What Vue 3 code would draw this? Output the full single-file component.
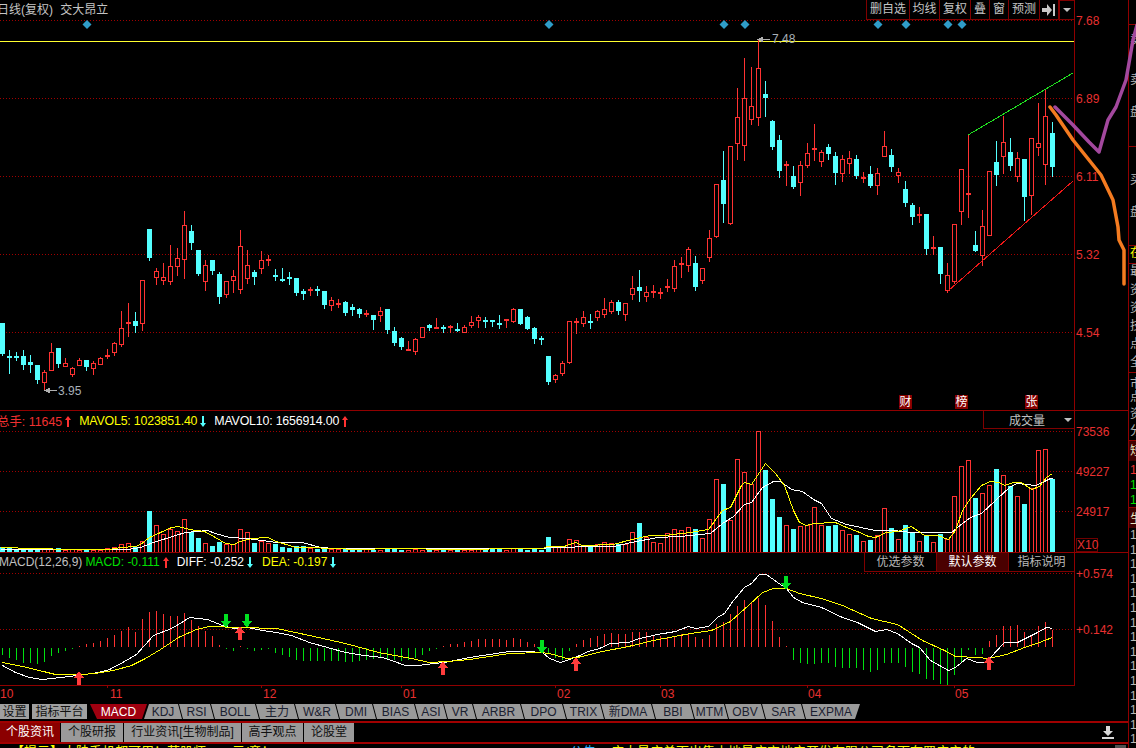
<script setup>
const K = [
[323,323,354,355,0],[350,356,357,373,0],[352,356,357,360,0],[350,356,365,369,0],[355,362,365,372,0],[365,365,380,383,0],[370,372,382,390,1],[343,352,370,370,1],[348,348,364,367,0],[358,363,366,366,1],
[367,368,374,376,1],[358,360,365,365,1],[360,360,367,370,0],[361,363,368,374,1],[357,358,364,364,1],[349,355,357,358,1],[342,343,352,355,1],[311,328,344,346,1],[303,322,323,336,1],[312,321,326,332,0],
[280,280,323,330,1],[229,229,258,260,0],[268,271,277,284,1],[263,277,280,284,1],[245,266,281,284,1],[248,258,266,275,1],[211,225,259,278,1],[225,231,243,249,0],[250,250,274,275,0],[260,265,281,290,1],
[260,260,271,274,0],[272,274,297,303,0],[281,281,294,297,1],[270,276,280,292,1],[230,246,289,293,1],[250,265,278,283,1],[270,272,277,284,0],[251,260,268,273,1],[255,259,260,265,1],[269,275,276,280,0],
[268,279,280,281,0],[272,277,278,284,0],[278,278,293,295,0],[289,291,294,299,0],[287,289,290,295,1],[286,289,290,295,0],[291,291,305,308,0],[297,300,305,310,1],[299,303,304,307,1],[301,302,313,315,0],
[304,307,310,315,0],[308,309,314,317,0],[310,313,314,316,1],[315,315,320,329,0],[307,311,315,321,1],[309,309,330,333,0],[327,331,343,345,0],[337,338,347,349,0],[341,349,350,350,1],[338,339,351,354,1],
[327,327,337,337,1],[324,325,328,330,0],[318,327,328,328,1],[325,327,329,332,0],[325,326,327,332,1],[323,329,330,331,0],[325,327,332,332,1],[316,322,325,327,1],[315,317,320,327,1],[317,320,321,327,0],
[320,320,322,326,0],[315,323,324,328,0],[319,319,321,327,1],[308,309,321,322,1],[309,309,324,324,0],[316,317,329,329,0],[327,328,339,343,0],[336,338,340,344,0],[356,356,382,384,0],[374,375,379,382,1],
[361,363,373,375,1],[321,321,362,363,1],[318,321,322,333,1],[311,317,323,326,1],[314,321,322,328,0],[310,311,317,320,1],[298,309,314,317,1],[300,302,311,313,1],[300,302,311,314,0],[303,303,314,320,1],
[276,288,294,299,1],[270,287,291,301,0],[286,292,296,301,1],[285,291,292,297,1],[288,292,293,298,1],[279,286,288,291,1],[260,266,288,291,1],[257,263,265,277,1],[247,249,265,271,1],[256,263,287,290,0],
[268,268,280,283,1],[230,238,257,261,1],[184,184,236,237,1],[151,180,204,222,0],[146,146,223,224,1],[88,117,143,159,1],[58,98,145,160,1],[67,106,119,124,1],[40,68,117,125,1],[81,94,98,116,0],
[120,121,147,149,0],[135,140,171,177,0],[161,164,165,185,1],[166,176,187,188,0],[161,165,182,195,1],[143,153,165,167,1],[124,148,149,160,1],[150,152,161,166,1],[144,147,154,159,0],[152,156,173,184,0],
[155,159,173,181,1],[151,158,163,173,1],[155,159,176,178,0],[172,177,179,182,1],[166,174,186,187,0],[168,173,185,194,1],[131,146,156,156,1],[149,155,167,171,0],[168,172,175,182,1],[181,189,203,206,0],
[203,205,217,224,0],[207,214,215,222,1],[214,214,249,254,0],[236,247,249,254,1],[247,247,274,283,0],[263,275,290,292,1],[224,224,281,283,1],[169,169,211,224,1],[135,193,195,217,1],[231,245,251,251,0],
[210,226,255,265,1],[171,171,235,235,1],[141,162,175,185,0],[116,142,156,173,1],[138,152,166,170,0],[152,158,176,181,1],[159,159,197,220,0],[138,138,195,214,1],[103,143,147,155,1],[89,116,164,184,1],
[122,133,167,176,0]
]
const volTops = [
547,548,549,549,549,549,549,549,548,550,549,550,550,550,550,548,547,544,543,547,541,511,525,534,529,531,519,532,538,543,546,542,544,544,529,532,543,541,543,544,547,548,546,546,548,549,547,549,
549,549,550,549,549,550,550,549,549,550,550,549,550,548,550,550,550,549,550,550,549,550,549,549,550,548,549,550,549,550,537,547,547,
539,540,546,546,544,542,543,544,544,532,523,537,542,543,533,529,530,527,529,538,519,479,484,520,459,472,484,431,470,499,517,525,529,526,525,507,525,526,525,530,534,535,541,540,535,508,528,539,525,532,541,535,542,534,539,496,466,460,498,493,485,469,475,486,496,504,488,450,449,479
]
const hist = [
300,310,315,323,325,326,322,303,295,288,282,273,268,264,258,250,240,229,215,230,192,170,168,177,182,182,175,195,212,228,242,270,283,288,278,279,287,285,283,293,300,305,315,318,318,318,318,318,318,320,320,318,316,312,310,312,315,318,316,310,300,288,282,274,267,266,262,258,252,251,252,253,254,249,252,260,268,290,298,308,315,
288,267,255,248,243,237,234,237,238,232,232,232,240,243,247,245,238,235,245,252,240,208,200,176,153,135,140,130,150,197,245,278,315,325,327,327,325,323,335,338,338,338,345,350,345,325,323,325,335,352,358,372,375,387,390,360,325,284,300,297,258,240,212,212,209,232,240,213,200,225
]
const candles = K.map((k, i) => {
  const [h, t, b, l, up] = k
  return { i, x: 2 + 7 * i, h, t, b, l, up: !!up, thin: b - t <= 2, v: volTops[i] }
})
const histBars = hist.map((z, i) => {
  const raw = Math.round(555 + z / 3)
  const red = z <= 278
  const y = red ? Math.min(raw, 646) : 648
  const h = red ? 647 - y : Math.max(raw - 648, 1)
  return { x: 2 + 7 * i, y, h, red }
})
const pp = (a) => {
  let s = ''
  for (let i = 0; i < a.length; i += 2) s += (Math.round(a[i]) + 0.5) + ',' + (Math.round(a[i + 1]) + 0.5) + ' '
  return s
}
const conv = (a, ox) => {
  const o = []
  for (let i = 0; i < a.length; i += 2) o.push(ox + a[i] / 2.75, 555 + a[i + 1] / 3)
  return o
}
const mavY = pp([0,547,13,547,22,548,47,548,58,549,109,549,120,547,135,546,140,544,149,537,160,532,171,527,178,526,189,529,204,531,215,537,225,543,233,544,240,541,251,538,267,537,276,541,295,547,313,547,327,548,342,548,349,549,400,548,415,548,436,549,542,548,547,546,564,546,566,545,575,542,582,545,613,544,631,539,650,535,664,535,690,532,708,529,722,510,730,507,741,485,744,482,751,484,765,463,775,473,784,485,793,510,799,522,806,525,813,523,835,522,846,527,857,531,868,536,875,537,886,532,897,531,911,526,924,535,937,535,948,539,955,530,962,510,970,498,981,485,990,481,999,482,1004,485,1013,482,1021,482,1031,489,1039,486,1046,477,1052,473])
const mavW = pp([0,549,127,549,140,547,153,542,175,535,185,532,207,530,215,533,229,537,247,538,276,542,302,542,320,547,335,548,542,548,549,547,566,547,584,546,613,546,631,542,657,537,679,536,710,533,722,523,733,516,744,504,751,502,762,487,773,481,780,481,791,489,802,491,813,499,821,503,831,518,846,524,875,530,893,530,911,532,951,532,962,523,970,517,981,513,995,500,1010,486,1017,483,1035,485,1042,482,1050,478,1052,478])
const macdW = pp([
  ...conv([5,330,40,352,80,367,115,373,140,368,190,362,230,357,270,350,300,342,340,318,375,297,395,270,420,240,470,220,490,208,520,187,570,192,610,210,640,220,680,215,720,224,760,230,800,240,850,262,900,275,950,290,1000,300,1050,305,1075,315,1115,330,1150,330,1190,325,1220,320,1290,305,1400,288,1450,287,1490,292,1510,310,1540,322], 0),
  ...conv([0,315,30,302,60,288,90,278,120,265,170,260,200,248,250,238,300,228,335,213,355,218,390,212,415,185,435,175,460,135,490,97,510,85,530,57,550,57,580,80,605,100,625,125,650,140,700,155,760,185,800,200,850,228,880,223,910,233,950,265,970,275,1000,315,1050,345,1070,335,1100,310,1130,320,1150,320,1165,305,1205,262,1240,260,1290,235,1320,216,1337,220], 566)
])
const macdY = pp([
  ...conv([5,320,60,332,130,352,150,357,220,358,260,355,310,345,360,330,400,310,440,282,490,247,540,222,575,214,660,215,760,220,850,240,950,265,1040,290,1130,310,1180,320,1230,318,1290,312,1400,295,1490,290,1520,298], 0),
  ...conv([0,308,30,305,100,288,170,272,240,255,340,235,400,225,450,197,500,150,540,110,570,100,605,100,640,115,700,130,760,150,840,188,910,208,980,255,1040,285,1070,302,1130,306,1160,310,1210,298,1260,275,1300,262,1337,247], 566)
])
const diamonds = [87, 549, 724, 745, 878, 906, 948, 962]
const mainGrid = [20, 98, 176, 254, 332]
const upArrows = [[79, 671], [240, 626], [443, 661], [576, 657], [989, 656]]
const downArrows = [[226, 614], [247, 614], [542, 640], [786, 576]]
const ticks = [107, 261, 401, 555, 660, 807, 954]
const months = [
  { t: '10', w: 110 }, { t: '11', w: 153 }, { t: '12', w: 140 }, { t: '01', w: 154 },
  { t: '02', w: 104 }, { t: '03', w: 147 }, { t: '04', w: 147 }, { t: '05', w: 60 }
]
const tools = [
  { t: '删自选', w: 43 }, { t: '均线', w: 30 }, { t: '复权', w: 31 }, { t: '叠', w: 19 }, { t: '窗', w: 19 }, { t: '预测', w: 31 }
]
const tabs = [
  ['MACD', 54], ['KDJ', 35], ['RSI', 32], ['BOLL', 45], ['主力', 39], ['W&R', 41], ['DMI', 37], ['BIAS', 42], ['ASI', 29], ['VR', 29], ['ARBR', 48], ['DPO', 42], ['TRIX', 38], ['新DMA', 51], ['BBI', 39], ['MTM', 34], ['OBV', 37], ['SAR', 40], ['EXPMA', 55]
]
const infoTabs = [
  { t: '个股资讯', w: 60 }, { t: '个股研报', w: 62 }, { t: '行业资讯[生物制品]', w: 117 }, { t: '高手观点', w: 61 }, { t: '论股堂', w: 50 }
]
const params = [
  { t: '优选参数', w: 71 }, { t: '默认参数', w: 73, on: true }, { t: '指标说明', w: 65 }
]
const sideRows = [
  { h: 24, t: '' }, { h: 49, t: '卖', line: 1, pad: 8 }, { h: 32, t: '卖' }, { h: 41, t: '盘' },
  { h: 27, t: '', line: 1 }, { h: 32, t: '买' }, { h: 40, t: '盘' },
  { h: 18, t: '在', line: 1, cls: 'yellow' }, { h: 20, t: '最', line: 1 }, { h: 18, t: '资' }, { h: 18, t: '资' }, { h: 18, t: '技' }, { h: 18, t: '点' }, { h: 17, t: '全' },
  { h: 18, t: '市', line: 1, pad: 4 }, { h: 17, t: '点' }, { h: 17, t: '资' }, { h: 16, t: '分' },
  { h: 21, t: '短', line: 1, cls: 'dark', pad: 3 }, { h: 15, t: '1', cls: 'red', pad: 2 }, { h: 15, t: '1', cls: 'green', pad: 2 }, { h: 16, t: '1', cls: 'green', pad: 2 },
  { h: 21, t: '生', line: 1, cls: 'dark', pad: 4 },
  ...Array.from({ length: 15 }, () => ({ h: 14.6, t: '1' }))
]
</script>

<template>
  <div class="screen">
    <div class="workspace">
      <section class="panel main-panel">
        <div class="plot">
          <svg class="chart" width="1074" height="410" viewBox="0 0 1074 410">
            <line v-for="y in mainGrid" :key="y" class="grid" x1="0" x2="1074" :y1="y + 0.5" :y2="y + 0.5" />
            <rect x="0" y="41" width="1074" height="1" class="yline" />
            <polygon v-for="x in diamonds" :key="x" class="diamond" :points="`${x - 4.5},24.5 ${x},20 ${x + 4.5},24.5 ${x},29`" />
            <template v-for="c in candles" :key="c.i">
              <rect :x="c.x" :y="c.h" width="1" :height="c.l - c.h + 1" :class="c.up ? 'fill-r' : 'fill-c'" />
              <rect v-if="!c.up || c.thin" :x="c.x - 2" :y="c.t" width="5" :height="Math.max(c.b - c.t, 2)" :class="c.up ? 'fill-r' : 'fill-c'" />
              <rect v-else :x="c.x - 1.5" :y="c.t + 0.5" width="4" :height="c.b - c.t" class="hollow" />
            </template>
            <line x1="968" y1="135" x2="1073" y2="73" class="trend-g" />
            <line x1="948" y1="291" x2="1073" y2="181" class="trend-r" />
            <path d="M758 39.5h12M758 39.5l4-2v4z" class="mark" />
            <text x="772" y="43" class="price-mark">7.48</text>
            <path d="M45 390.5h12M45 390.5l4-2v4z" class="mark" />
            <text x="58" y="395" class="price-mark">3.95</text>
          </svg>
          <div class="title">日线(复权) <span class="stock">交大昂立</span></div>
          <div class="toolbar">
            <div v-for="b in tools" :key="b.t" class="tool" :style="{ width: b.w + 'px' }">{{ b.t }}</div>
            <div class="tool arrow-tool">
              <svg width="14" height="12" viewBox="0 0 14 12"><path d="M0 4h5V0l5 6-5 6V8H0zM11 0h2v12h-2z" fill="#c8c8c8" /></svg>
            </div>
            <div class="tool drop-tool"><span class="caret"></span></div>
          </div>
          <span class="badge b1">财</span>
          <span class="badge b2">榜</span>
          <span class="badge b3">张</span>
        </div>
        <div class="axis">
          <span class="axis-label" v-for="(t, i) in ['7.68', '6.89', '6.11', '5.32', '4.54']" :key="t" :style="{ top: mainGrid[i] - 7 + 'px' }">{{ t }}</span>
        </div>
      </section>

      <section class="panel vol-panel">
        <div class="plot">
          <svg class="chart" width="1074" height="141" viewBox="0 411 1074 141">
            <line v-for="y in [431, 471, 511]" :key="y" class="grid" x1="0" x2="1074" :y1="y + 0.5" :y2="y + 0.5" />
            <template v-for="c in candles" :key="c.i">
              <rect v-if="!c.up" :x="c.x - 2" :y="c.v" width="5" :height="552 - c.v" class="fill-c" />
              <rect v-else :x="c.x - 1.5" :y="c.v + 0.5" width="4" :height="552 - c.v" class="hollow" />
            </template>
            <polyline :points="mavW" class="l-white" />
            <polyline :points="mavY" class="l-yellow" />
          </svg>
          <div class="legend legend-v">
            <span class="red">总手: 11645</span>
            <svg class="mini" viewBox="0 0 6 11"><path d="M3 0l3 4H4v7H2V4H0z" fill="#ff3232" /></svg>
            <span class="yellow tight gap8">MAVOL5: 1023851.40</span>
            <svg class="mini" viewBox="0 0 6 11"><path d="M3 11l3-4H4V0H2v7H0z" fill="#54ffff" /></svg>
            <span class="white tight gap8">MAVOL10: 1656914.00</span>
            <svg class="mini" viewBox="0 0 6 11"><path d="M3 0l3 4H4v7H2V4H0z" fill="#ff3232" /></svg>
          </div>
          <div class="selector">成交量<span class="caret sel-caret"></span></div>
        </div>
        <div class="axis">
          <span class="axis-label" style="top:13px">73536</span>
          <span class="axis-label" style="top:53px">49227</span>
          <span class="axis-label" style="top:93px">24917</span>
          <span class="x10">X10</span>
        </div>
      </section>

      <section class="panel macd-panel">
        <div class="plot plot-b">
          <svg class="chart" width="1074" height="132" viewBox="0 553 1074 132">
            <line v-for="y in [573, 629]" :key="y" class="grid" x1="0" x2="1074" :y1="y + 0.5" :y2="y + 0.5" />
            <rect v-for="b in histBars" :key="b.x" :x="b.x" :y="b.y" width="1" :height="b.h" :class="b.red ? 'fill-r' : 'fill-g'" />
            <polyline :points="macdW" class="l-white" />
            <polyline :points="macdY" class="l-yellow" />
            <path v-for="a in upArrows" :key="a[0]" class="up" :d="`M${a[0]} ${a[1]}l5 7h-3v7h-4v-7h-3z`" />
            <path v-for="a in downArrows" :key="a[0]" class="down" :d="`M${a[0]} ${a[1] + 14}l5-7h-3v-7h-4v7h-3z`" />
          </svg>
          <div class="legend legend-m">
            <span class="grey">MACD(12,26,9)</span>
            <span class="green gap3">MACD: -0.111</span>
            <svg class="mini" viewBox="0 0 6 11"><path d="M3 0l3 4H4v7H2V4H0z" fill="#ff3232" /></svg>
            <span class="white gap8">DIFF: -0.252</span>
            <svg class="mini" viewBox="0 0 6 11"><path d="M3 11l3-4H4V0H2v7H0z" fill="#54ffff" /></svg>
            <span class="yellow gap9">DEA: -0.197</span>
            <svg class="mini" viewBox="0 0 6 11"><path d="M3 11l3-4H4V0H2v7H0z" fill="#54ffff" /></svg>
          </div>
          <div class="params">
            <span v-for="p in params" :key="p.t" class="param" :class="{ active: p.on }" :style="{ width: p.w + 'px' }">{{ p.t }}</span>
          </div>
        </div>
        <div class="axis">
          <span class="axis-label" style="top:13px">+0.574</span>
          <span class="axis-label" style="top:69px">+0.142</span>
        </div>
      </section>

      <div class="timeline">
        <span v-for="x in ticks" :key="x" class="tick" :style="{ left: x + 'px' }"></span>
        <span v-for="m in months" :key="m.t" class="month" :style="{ width: m.w + 'px' }">{{ m.t }}</span>
      </div>

      <div class="tabbar">
        <span class="btn b-set">设置</span>
        <span class="btn b-plat">指标平台</span>
        <div class="tabs">
          <span v-for="(t, i) in tabs" :key="t[0]" class="tab" :class="{ on: i === 0, first: i === 1, last: i === tabs.length - 1 }" :style="{ width: t[1] + 3 + 'px' }">{{ t[0] }}</span>
        </div>
      </div>

      <div class="infobar">
        <span v-for="(t, i) in infoTabs" :key="t.t" class="info" :class="{ on: i === 0 }" :style="{ width: t.w + 'px' }">{{ t.t }}</span>
        <svg class="download" width="12" height="13" viewBox="0 0 12 13"><path d="M4 0h4v5h3L6 10 1 5h3zM0 11h12v2H0z" fill="#d8d8d8" /></svg>
      </div>

      <div class="ticker">
        <span class="t-left">【提示】大陆手机都可用！苏股师，一元/章！</span>
        <span class="t-blue">公告：</span>
        <span class="t-right">广大最广单面出售土地最广宇地产开发有限公司名下布罗广产的</span>
        <span class="scroll"></span>
      </div>
    </div>

    <aside class="side">
      <div v-for="(r, i) in sideRows" :key="i" class="side-row" :class="[r.cls, { line: r.line }]" :style="{ height: r.h + 'px', paddingTop: (r.pad || 0) + 'px' }">{{ r.t }}</div>
    </aside>

    <svg class="scribble" width="1136" height="748" viewBox="0 0 1136 748">
      <polyline points="1050,107 1056,115 1073,140 1089,160 1101,175 1113,200 1118,227 1119,240 1124,250 1124,284" class="s-orange" />
      <polyline points="1055,107 1073,125 1089,142 1099,152 1108,120 1116,107 1126,80 1129,63 1133,40 1137,25" class="s-purple" />
    </svg>
  </div>
</template>

<style>
html, body { margin: 0; background: #000; }
</style>

<style scoped>
.screen {
  position: relative;
  width: 1136px;
  height: 748px;
  overflow: hidden;
  display: flex;
  background: #000;
  font-family: "Liberation Sans", "Noto Sans CJK SC", sans-serif;
  font-size: 12px;
  color: #c0c0c0;
}
.workspace { width: 1128px; display: flex; flex-direction: column; flex: none; }
.panel { display: flex; flex: none; box-sizing: border-box; border-bottom: 1px solid #900000; }
.main-panel { height: 411px; }
.vol-panel { height: 142px; }
.macd-panel { height: 133px; border-bottom: 0; }
.plot { position: relative; width: 1075px; box-sizing: border-box; border-right: 1px solid #900000; flex: none; }
.plot-b { border-bottom: 1px solid #900000; }
.axis { position: relative; flex: 1; }
.axis-label { position: absolute; left: 1px; color: #e83030; line-height: 16px; }
.chart { display: block; shape-rendering: crispEdges; }
.grid { stroke: #a00000; stroke-width: 1; stroke-dasharray: 1 2; }
.yline { fill: #ffff30; }
.diamond { fill: #2f9cc8; shape-rendering: geometricPrecision; }
.fill-r { fill: #ff3232; }
.fill-c { fill: #54ffff; }
.fill-g { fill: #00e010; }
.hollow { fill: #000; stroke: #ff3232; stroke-width: 1; }
.trend-g { stroke: #20e020; stroke-width: 1; }
.trend-r { stroke: #f01818; stroke-width: 1; }
.l-white { fill: none; stroke: #fff; stroke-width: 1; }
.l-yellow { fill: none; stroke: #ffff00; stroke-width: 1; }
.up { fill: #ff3c3c; }
.down { fill: #00e020; }
.mark { stroke: #b0b0b0; fill: #b0b0b0; stroke-width: 1; }
.price-mark { fill: #a8b0b8; font-size: 12px; }
.title { position: absolute; left: -3px; top: 2px; line-height: 16px; color: #c4c4c4; white-space: pre; }
.stock { margin-left: 4px; }
.toolbar {
  position: absolute; right: 0; top: 0; height: 20px; display: flex; box-sizing: border-box;
  border-bottom: 1px solid #800000; border-left: 1px solid #800000;
}
.tool {
  box-sizing: border-box; height: 19px; line-height: 19px; text-align: center; border-right: 1px solid #800000;
  display: flex; align-items: center; justify-content: center; color: #c4c4c4;
}
.arrow-tool { width: 19px; }
.drop-tool { width: 15px; border-right: 0; border-left: 1px solid #800000; border-top: 1px solid #800000; }
.caret { display: block; width: 0; height: 0; border-left: 4px solid transparent; border-right: 4px solid transparent; border-top: 4px solid #c0c0c0; }
.badge { position: absolute; top: 395px; width: 13px; height: 14px; line-height: 14px; background: #860000; color: #fff; text-align: center; }
.b1 { left: 899px; }
.b2 { left: 955px; }
.b3 { left: 1025px; }
.legend { position: absolute; left: -3px; top: 0; height: 20px; display: flex; align-items: center; white-space: nowrap; }
.legend-v { font-size: 12.4px; }
.legend-m { left: -1px; top: -1px; }
.mini { width: 6px; height: 11px; margin-left: 3px; flex: none; }
.tight { letter-spacing: -0.2px; }
.gap8 { margin-left: 8px; }
.gap9 { margin-left: 9px; }
.gap3 { margin-left: 3px; }
.red { color: #f03030; }
.yellow { color: #ffff00; }
.white { color: #fff; }
.grey { color: #c0c0c0; }
.green { color: #00e000; }
.selector {
  position: absolute; right: 0; top: 0; width: 91px; height: 18px; box-sizing: border-box; line-height: 20px;
  border-left: 1px solid #800000; border-bottom: 1px solid #800000; padding-left: 25px; color: #c0c0c0;
}
.sel-caret { position: absolute; right: 2px; top: 7px; }
.x10 { position: absolute; left: 1px; top: 127px; width: 22px; height: 14px; box-sizing: border-box; border: 1px solid #700000; color: #e83030; line-height: 13px; text-align: center; }
.params {
  position: absolute; right: 0; top: 0; display: flex; height: 19px; box-sizing: border-box;
  border-left: 1px solid #800000; border-bottom: 1px solid #800000;
}
.param { box-sizing: border-box; line-height: 18px; text-align: center; color: #b8b8b8; }
.param.active { color: #fff; background: #4a0000; border-left: 1px solid #800000; border-right: 1px solid #800000; }
.timeline { position: relative; display: flex; height: 18px; flex: none; color: #e83030; line-height: 17px; width: 1075px; }
.tick { position: absolute; top: -1px; width: 1px; height: 3px; background: #900000; }
.month { display: block; flex: none; font-size: 12px; }
.tabbar { display: flex; height: 17px; flex: none; border-bottom: 2px solid #a00000; }
.btn { height: 15px; line-height: 16px; background: #a0a0a0; color: #111; text-align: center; flex: none; }
.b-set { width: 29px; }
.b-plat { width: 55px; margin-left: 3px; }
.tabs { display: flex; margin-left: 3px; height: 15px; }
.tab {
  box-sizing: border-box; flex: none; background: #9a9a9a; color: #1a2030; text-align: center; line-height: 16px;
  margin-right: -3px;
  clip-path: polygon(0 0, calc(100% - 4px) 0, 100% 100%, 4px 100%);
}
.tab.on { background: #a00010; color: #fff; clip-path: polygon(0 0, 100% 0, calc(100% - 5px) 100%, 7px 100%); }
.tab.first { clip-path: polygon(5px 0, calc(100% - 4px) 0, 100% 100%, 0 100%); }
.tab.last { clip-path: polygon(0 0, 100% 0, calc(100% - 5px) 100%, 4px 100%); }
.infobar { position: relative; display: flex; height: 19px; flex: none; gap: 1px; border-bottom: 2px solid #a00000; }
.info { height: 19px; line-height: 19px; background: #9a9a9a; color: #111; text-align: center; flex: none; }
.info.on { background: #8b0000; color: #fff; }
.download { position: absolute; left: 1102px; top: 3px; }
.ticker { position: relative; flex: 1; overflow: hidden; white-space: nowrap; font-size: 13px; line-height: 15px; color: #ffff00; }
.t-left { position: absolute; left: 11px; top: 0; }
.t-blue { position: absolute; left: 570px; top: 0; color: #30b0ff; }
.t-right { position: absolute; left: 611px; top: 0; }
.scroll { position: absolute; left: 1115px; top: 1px; width: 11px; height: 6px; background: #505050; }
.side { position: relative; flex: 1; overflow: hidden; border-left: 1px solid #900000; box-sizing: border-box; }
.side-row { box-sizing: border-box; width: 14px; line-height: 14px; color: #b8b8b8; padding-left: 1px; }
.side-row.line { border-top: 1px solid #900000; }
.side-row.yellow { color: #ffff00; }
.side-row.red { color: #f03030; }
.side-row.green { color: #00e000; }
.side-row.dark { background: #400000; color: #e8e8c0; }
.scribble { position: absolute; left: 0; top: 0; pointer-events: none; }
.s-purple { fill: none; stroke: #a3489e; stroke-width: 3.5; stroke-linejoin: round; stroke-linecap: round; }
.s-orange { fill: none; stroke: #f47b20; stroke-width: 3.5; stroke-linejoin: round; stroke-linecap: round; }
</style>
